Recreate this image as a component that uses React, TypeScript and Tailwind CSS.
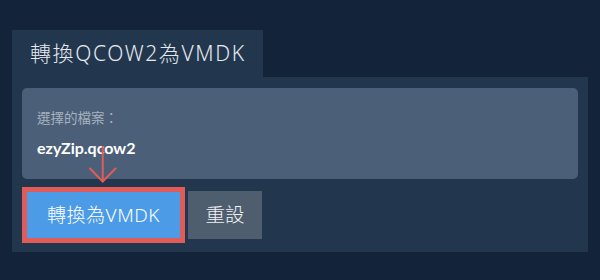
import React from "react";

export default function App() {
  return (
    <div
      className="w-[600px] h-[280px] bg-[#12233a] pt-[30px] px-[12px]"
      style={{ fontFamily: '"Noto Sans", "Noto Sans CJK TC", sans-serif' }}
    >
      <div className="w-[251px] h-[47px] bg-[#22374e] flex items-center pl-[18px]">
        <span className="text-[21px] text-[#e6e9ee] tracking-[1.6px] leading-none font-light">轉換QCOW2為VMDK</span>
      </div>
      <div className="h-[175px] bg-[#22374e] px-[10px] pt-[11px] relative">
        <div
          className="h-[91px] rounded-[5px] bg-[#4b6078] px-[15px] flex flex-col"
          style={{ fontFamily: 'Lato, "Noto Sans CJK TC", sans-serif' }}
        >
          <div className="mt-[21px] text-[13.5px] leading-[18px] text-[#a7b1bf]">選擇的檔案：</div>
          <div className="mt-[11px] text-[16px] leading-[20px] font-bold text-white">ezyZip.qcow2</div>
        </div>
        <div className="flex items-start gap-[3px] mt-[8px]">
          <div className="border-[5px] border-[#df5c58] bg-[#4b9be7] w-[163px] h-[56px] flex items-center justify-center">
            <span className="text-[19px] text-white leading-none tracking-[0.5px] font-light">轉換為VMDK</span>
          </div>
          <div className="mt-[4px] w-[74px] h-[48px] bg-[#4f5e6f] flex items-center justify-center">
            <span className="text-[19.5px] text-[#f2f4f7] leading-none font-light">重設</span>
          </div>
        </div>
        <svg className="absolute left-[76px] top-[69px]" width="30" height="40" viewBox="0 0 30 40">
          <line x1="14.75" y1="0" x2="14.75" y2="36" stroke="#df5c58" strokeWidth="2" />
          <polyline points="1.5,22 14.75,35.5 28,22" fill="none" stroke="#df5c58" strokeWidth="2" />
        </svg>
      </div>
    </div>
  );
}
